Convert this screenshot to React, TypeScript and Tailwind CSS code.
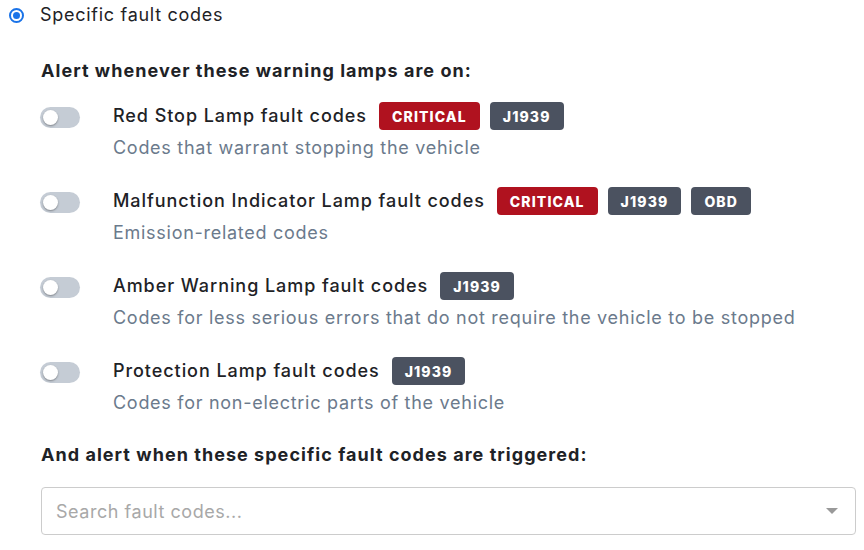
import React from "react";

type Badge = { label: string; kind: "red" | "gray" };
const rows: { title: string; desc: string; badges: Badge[] }[] = [
  {
    title: "Red Stop Lamp fault codes",
    desc: "Codes that warrant stopping the vehicle",
    badges: [
      { label: "CRITICAL", kind: "red" },
      { label: "J1939", kind: "gray" },
    ],
  },
  {
    title: "Malfunction Indicator Lamp fault codes",
    desc: "Emission-related codes",
    badges: [
      { label: "CRITICAL", kind: "red" },
      { label: "J1939", kind: "gray" },
      { label: "OBD", kind: "gray" },
    ],
  },
  {
    title: "Amber Warning Lamp fault codes",
    desc: "Codes for less serious errors that do not require the vehicle to be stopped",
    badges: [{ label: "J1939", kind: "gray" }],
  },
  {
    title: "Protection Lamp fault codes",
    desc: "Codes for non-electric parts of the vehicle",
    badges: [{ label: "J1939", kind: "gray" }],
  },
];

function Toggle() {
  return (
    <div className="w-[40px] h-[21px] rounded-full bg-[#c5ccd5] flex items-center px-[3px] shrink-0">
      <div className="w-[15px] h-[15px] rounded-full bg-white shadow-[0_1px_2px_rgba(0,0,0,0.35)]" />
    </div>
  );
}

export default function App() {
  return (
    <div
      className="w-[864px] h-[550px] bg-white text-[#1e2226] overflow-hidden"
      style={{ fontFamily: "Inter, 'Noto Sans', sans-serif" }}
    >
      <div className="flex items-center h-[26px] mt-[2px]">
        <div className="ml-[9px] w-[15px] h-[15px] rounded-full border-[2px] border-[#1a73e8] flex items-center justify-center">
          <div className="w-[7px] h-[7px] rounded-full bg-[#1a73e8]" />
        </div>
        <span className="ml-[16px] text-[18px] leading-[26px] tracking-[0.04em]">Specific fault codes</span>
      </div>

      <div className="ml-[41px] mt-[30px] text-[18px] leading-[26px] font-bold tracking-[0.058em]">
        Alert whenever these warning lamps are on:
      </div>

      <div className="ml-[40px] mt-[17px] flex flex-col gap-[25px]">
        {rows.map((r) => (
          <div key={r.title} className="flex">
            <div className="pt-[6px] w-[73px] shrink-0">
              <Toggle />
            </div>
            <div className="flex flex-col">
              <div className="flex items-center h-[30px]">
                <span className="text-[18px] font-medium leading-[26px] tracking-[0.052em]">{r.title}</span>
                <div className="flex ml-[12px] gap-[10px]">
                  {r.badges.map((b) => (
                    <span
                      key={b.label}
                      className={`h-[28px] px-[13px] rounded-[4px] flex items-center text-[14px] font-extrabold tracking-[0.08em] text-white ${
                        b.kind === "red" ? "bg-[#b0121f]" : "bg-[#4b5260]"
                      }`}
                    >
                      {b.label}
                    </span>
                  ))}
                </div>
              </div>
              <div className="mt-[4px] text-[18px] leading-[26px] text-[#6b7a8c] tracking-[0.04em]">{r.desc}</div>
            </div>
          </div>
        ))}
      </div>

      <div className="ml-[41px] mt-[26px] text-[18px] leading-[26px] font-bold tracking-[0.058em]">
        And alert when these specific fault codes are triggered:
      </div>

      <div className="ml-[41px] mt-[19px] w-[815px] h-[48px] border border-[#cccccc] rounded-[4px] flex items-center pl-[14px] pr-[17px]">
        <span className="flex-1 text-[18px] text-[#a8a8a8] tracking-[0.03em]">Search fault codes...</span>
        <svg width="12" height="6" viewBox="0 0 12 6">
          <path d="M0 0 L12 0 L6 6 Z" fill="#999999" />
        </svg>
      </div>
    </div>
  );
}
